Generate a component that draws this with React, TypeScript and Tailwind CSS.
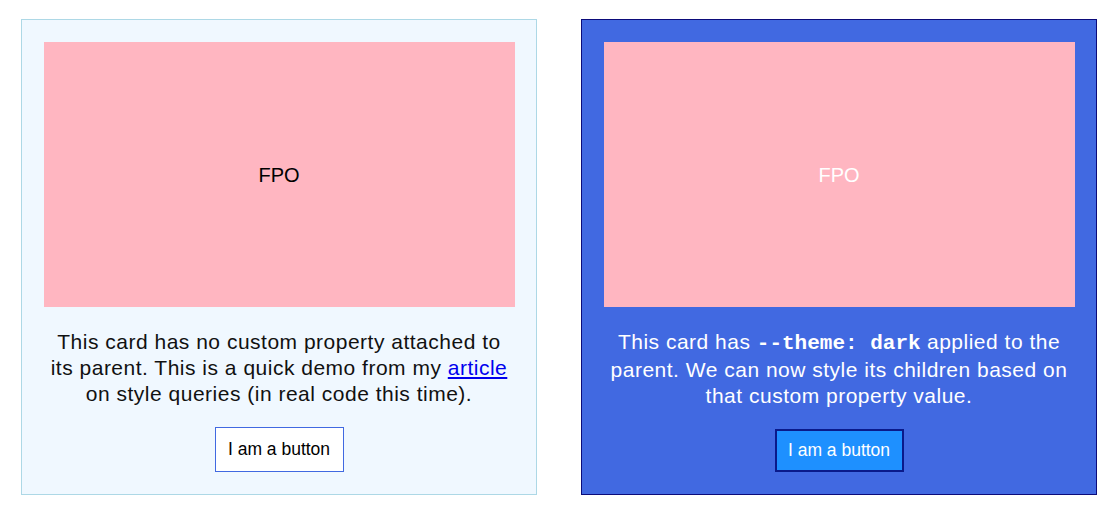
import type { ReactNode } from "react";

function Card({
  dark,
  children,
}: {
  dark?: boolean;
  children: ReactNode;
}) {
  return (
    <div
      className={`w-[516px] h-[476px] border p-[22px] flex flex-col items-center text-center ${
        dark ? "bg-[#4169e1] border-[#0b0b7a] text-white" : "bg-[#f0f8ff] border-[#add8e6] text-[#111]"
      }`}
    >
      {/* placeholder image */}
      <div
        className={`w-[471px] h-[265px] shrink-0 bg-[#ffb6c1] flex items-center justify-center text-[20px] ${
          dark ? "text-white" : "text-black"
        }`}
      >
        FPO
      </div>
      <p className="mt-[22px] text-[21px] leading-[26px] tracking-[0.5px] px-[4px]">{children}</p>
      <button
        type="button"
        className={`mt-[20px] w-[129px] h-[45px] text-[17.5px] ${
          dark ? "bg-[#1e90ff] border-2 border-[#0a1a8a] text-white" : "bg-white border border-[#4169e1] text-black"
        }`}
      >
        I am a button
      </button>
    </div>
  );
}

export default function App() {
  return (
    <div className="w-[1120px] h-[517px] bg-white pl-[21px] pt-[19px] flex gap-[44px] font-['Liberation_Sans',Arial,sans-serif]">
      <Card>
        This card has no custom property attached to its parent. This is a quick demo from my{" "}
        <a href="#" className="text-[#0000ee] underline">
          article
        </a>{" "}
        on style queries (in real code this time).
      </Card>
      <Card dark>
        This card has{" "}
        <code className="font-['Liberation_Mono','Courier_New',monospace] font-bold text-[21px] tracking-normal">
          --theme: dark
        </code>{" "}
        applied to the parent. We can now style its children based on that custom property value.
      </Card>
    </div>
  );
}
